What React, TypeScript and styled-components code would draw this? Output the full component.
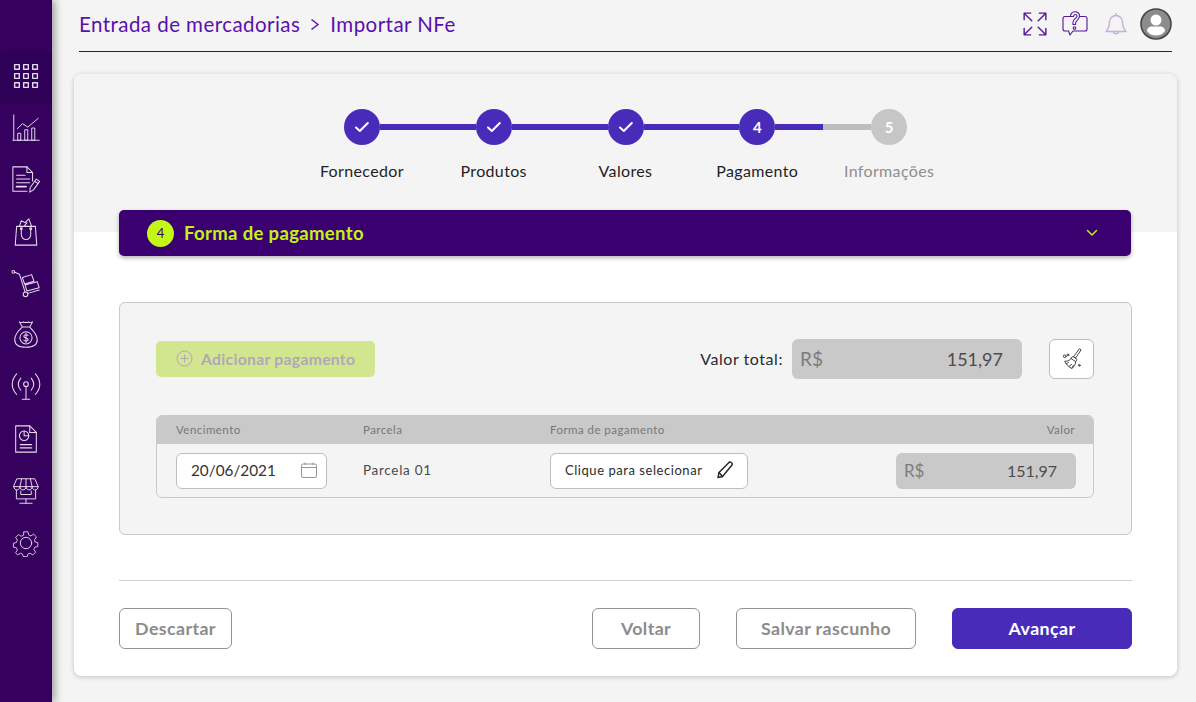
import React from "react";
import styled, { createGlobalStyle } from "styled-components";

const Global = createGlobalStyle`
  html, body { margin: 0; padding: 0; height: 100%; }
  body { background: #f4f4f4; font-family: "Lato", "Noto Sans", sans-serif; overflow: hidden; }
  * { box-sizing: border-box; }
`;

const Shell = styled.div`
  display: flex;
  width: 1196px;
  height: 702px;
`;
const Sidebar = styled.nav`
  width: 52px;
  flex: none;
  background: #36005f;
  padding-top: 51px;
  box-shadow: 3px 0 8px rgba(0, 0, 0, 0.35);
  z-index: 2;
`;
const NavItem = styled.div<{ $active?: boolean }>`
  height: 51.8px;
  display: flex;
  align-items: center;
  justify-content: center;
  background: ${(p) => (p.$active ? "#2f0058" : "transparent")};
  border-radius: ${(p) => (p.$active ? "6px 0 0 0" : "0")};
  border-bottom: 1px solid rgba(0, 0, 0, 0.06);
  color: #e6dcee;
  svg { display: block; }
`;
const Main = styled.main`
  flex: 1;
  min-width: 0;
  padding: 0 19px 26px 22px;
  display: flex;
  flex-direction: column;
`;
const TopBar = styled.header`
  height: 52px;
  margin: 0 5px 22px 5px;
  display: flex;
  align-items: center;
  justify-content: space-between;
  border-bottom: 1px solid #4a0099;
  padding-bottom: 3px;
`;
const Crumbs = styled.div`
  display: flex;
  align-items: center;
  font-size: 20.5px;
  letter-spacing: 0.45px;
  color: #5a10ac;
  gap: 10px;
`;
const TopIcons = styled.div`
  display: flex;
  align-items: center;
  color: #54189a;
  svg { display: block; }
`;
const IconSlot = styled.span<{ $w: number; $faded?: boolean }>`
  width: ${(p) => p.$w}px;
  display: flex;
  justify-content: center;
  opacity: ${(p) => (p.$faded ? 0.3 : 1)};
`;
const Card = styled.section`
  height: 602px;
  border-radius: 8px;
  padding: 35px 45px 0;
  background: linear-gradient(#f4f4f4 158px, #fff 158px);
  box-shadow: 0 1px 5px rgba(0, 0, 0, 0.22);
`;
const Track = styled.div`
  width: 563px;
  margin: 0 auto;
  display: flex;
  align-items: center;
`;
const Dot = styled.div<{ $on: boolean }>`
  width: 36px;
  height: 36px;
  flex: none;
  border-radius: 50%;
  background: ${(p) => (p.$on ? "#482cb9" : "#c6c6c6")};
  color: #fff;
  font-size: 15px;
  font-weight: 700;
  display: flex;
  align-items: center;
  justify-content: center;
`;
const Link = styled.div<{ $pct: number }>`
  flex: 1;
  height: 6px;
  background: linear-gradient(
    to right,
    #482cb9 ${(p) => p.$pct}%,
    #bdbdbd ${(p) => p.$pct}%
  );
`;
const Labels = styled.div`
  width: 659px;
  margin: 16px auto 0;
  display: grid;
  grid-template-columns: repeat(5, 1fr);
`;
const StepLabel = styled.div<{ $on: boolean }>`
  text-align: center;
  font-size: 16px;
  line-height: 20px;
  letter-spacing: 0.35px;
  color: ${(p) => (p.$on ? "#1f1f24" : "#8e8e8e")};
`;
const Accordion = styled.div`
  height: 46px;
  margin: 29px 1px 0 0;
  border-radius: 5px;
  background: #3a006f;
  box-shadow: 0 2px 4px rgba(0, 0, 0, 0.3);
  display: flex;
  align-items: center;
  padding: 0 33px 0 28px;
  color: #c3f218;
`;
const Badge = styled.span`
  width: 27px;
  height: 27px;
  border-radius: 50%;
  background: #c3f716;
  color: #3a006f;
  font-size: 13px;
  display: flex;
  align-items: center;
  justify-content: center;
`;
const AccTitle = styled.span`
  flex: 1;
  margin-left: 10px;
  font-size: 18.5px;
  font-weight: 700;
  letter-spacing: 0.35px;
`;
const Panel = styled.div`
  height: 233px;
  margin-top: 46px;
  background: #f4f4f4;
  border: 1px solid #c9c9c9;
  border-radius: 6px;
  padding: 36px 37px 0 36px;
`;
const PanelTop = styled.div`
  display: flex;
  align-items: center;
  height: 40px;
`;
const AddBtn = styled.div`
  width: 219px;
  height: 36px;
  border-radius: 5px;
  background: #d2e690;
  color: #b0a8b8;
  font-size: 15.8px;
  font-weight: 700;
  letter-spacing: 0.25px;
  display: flex;
  align-items: center;
  gap: 8px;
  padding: 0 0 1px 20px;
`;
const TotalLabel = styled.span`
  margin-left: auto;
  margin-right: 9px;
  font-size: 16px;
  letter-spacing: 0.55px;
  color: #2a2a30;
  padding-bottom: 1px;
`;
const Money = styled.div<{ $w: number; $h: number; $size: number; $pad: number }>`
  width: ${(p) => p.$w}px;
  height: ${(p) => p.$h}px;
  border-radius: 6px;
  background: #c9c9c9;
  display: flex;
  align-items: center;
  justify-content: space-between;
  padding: 0 ${(p) => p.$pad}px 1px 8px;
  font-size: ${(p) => p.$size}px;
  color: #4c4c4c;
  span:first-child { color: #7c7c7c; font-size: 1.06em; }
`;
const BroomBtn = styled.div`
  width: 45px;
  height: 40px;
  margin-left: 27px;
  background: #fff;
  border: 1px solid #bdbdbd;
  border-radius: 6px;
  display: flex;
  align-items: center;
  justify-content: center;
  color: #333;
`;
const Table = styled.div`
  margin-top: 36px;
  height: 83px;
  border: 1px solid #c9c9c9;
  border-radius: 6px;
  overflow: hidden;
`;
const Columns = styled.div`
  display: grid;
  grid-template-columns: 187px 187px 1fr 180px;
  padding: 0 17px 0 19px;
  align-items: center;
`;
const HeadRow = styled(Columns)`
  height: 28px;
  padding-bottom: 2px;
  background: #c9c9c9;
  font-size: 11.5px;
  letter-spacing: 0.45px;
  color: #77777a;
`;
const BodyRow = styled(Columns)`
  height: 53px;
`;
const RightCell = styled.span`
  text-align: right;
  padding-right: 1px;
`;
const DateField = styled.div`
  width: 151px;
  height: 36px;
  background: #fff;
  border: 1px solid #bdbdbd;
  border-radius: 6px;
  display: flex;
  align-items: center;
  justify-content: space-between;
  padding: 0 9px 1px 14px;
  font-size: 15.3px;
  color: #333;
  svg { color: #969696; }
`;
const CellText = styled.span`
  font-size: 13.5px;
  letter-spacing: 0.7px;
  color: #4a4a4a;
  padding-bottom: 2px;
`;
const SelectBtn = styled.div`
  width: 198px;
  height: 36px;
  background: #fff;
  border: 1px solid #bdbdbd;
  border-radius: 6px;
  display: flex;
  align-items: center;
  justify-content: space-between;
  padding: 0 13px 1px 14px;
  font-size: 13px;
  letter-spacing: 0.55px;
  color: #2c2c2c;
`;
const Divider = styled.hr`
  border: 0;
  border-top: 1px solid #cfcfcf;
  margin: 45px 0 27px;
`;
const Actions = styled.div`
  display: flex;
  align-items: center;
`;
const Btn = styled.button<{ $w: number; $primary?: boolean; $gap?: number }>`
  width: ${(p) => p.$w}px;
  height: 41px;
  margin-left: ${(p) => p.$gap ?? 0}px;
  border-radius: 6px;
  border: 1px solid ${(p) => (p.$primary ? "#482cb9" : "#939393")};
  background: ${(p) => (p.$primary ? "#482cb9" : "#fff")};
  color: ${(p) => (p.$primary ? "#fff" : "#8c8c8c")};
  font-family: inherit;
  font-size: 17.8px;
  font-weight: 700;
  letter-spacing: 0.4px;
  padding: 0 0 2px;
`;

const L: React.FC<React.PropsWithChildren<{ s: number; sw?: number; vb?: number }>> = ({ s, sw = 1.1, vb = 32, children }) => (
  <svg width={s} height={s} viewBox={`0 0 ${vb} ${vb}`} fill="none" stroke="currentColor" strokeWidth={sw} strokeLinecap="round" strokeLinejoin="round">
    {children}
  </svg>
);

const Apps = () => (
  <L s={34} sw={1.3}>
    {[0, 1, 2].flatMap((r) =>
      [0, 1, 2].map((c) => <rect key={`${r}${c}`} x={5.3 + c * 8.5} y={5.3 + r * 8.5} width={4.4} height={4.4} />)
    )}
  </L>
);
const Chart = () => (
  <L s={28}>
    <path d="M2 1v29M1 30h30" />
    <rect x="7" y="22" width="3" height="8" />
    <rect x="15" y="18" width="3" height="12" />
    <rect x="23" y="16" width="3" height="14" />
    <path d="M6 17l6-6 6 4 12-10" />
  </L>
);
const Doc = () => (
  <L s={30}>
    <path d="M23 17V8l-6-6H2v26h15" />
    <path d="M17 2v6h6" />
    <path d="M6 11h9M6 15h14M6 19h14" />
    <path d="M6 23h10" strokeWidth="2" />
    <path d="M20 29l.5-5 6.500-9 3.500 2.500-6.500 9zM25.500 17.500l3.500 2.500" />
  </L>
);
const Bag = () => (
  <L s={30}>
    <path d="M6 10h20l1.500 20h-23zM6 10h20" />
    <path d="M11 12v7a5 5 0 0 0 10 0v-7" />
    <circle cx="11" cy="12.500" r="1" />
    <circle cx="21" cy="12.500" r="1" />
    <path d="M9 10l2-6 4 2 4-4 3 8M14 10l3-4" />
  </L>
);
const Cart = () => (
  <L s={30}>
    <circle cx="2.500" cy="3" r="1.500" />
    <path d="M4 3.500l5 2 6 19" />
    <circle cx="15.500" cy="27" r="2.500" />
    <path d="M18 26l12-3.500" />
    <path d="M12 9l10-3 2.500 7-10 3zM15 17l13-3.500 2 6.500-13 3.500z" />
  </L>
);
const Money2 = () => (
  <L s={30}>
    <path d="M12 7.500L9 2c2 1 3.500 1 4.500 0 1 1 4 1 5 0 1 1 2.500 1 4.500 0l-3 5.500M12 7.500h8M12 7.500C8 11 4 16 4 21c0 5 4 8 12 8s12-3 12-8c0-5-4-9.500-8-13.500" />
    <circle cx="16" cy="19" r="6.500" />
    <path d="M18.300 16.500c-1-1.200-4.600-1.300-4.600 1 0 2.300 4.600 1 4.600 3.200 0 2.300-3.700 2.100-4.600.9M16 14v10" />
  </L>
);
const Signal = () => (
  <L s={30}>
    <circle cx="16" cy="13" r="2.500" />
    <path d="M16 15.500V29M12 29h8" />
    <path d="M10.500 6.500c-3.500 4-3.500 9 0 13M21.500 6.500c3.500 4 3.500 9 0 13" />
    <path d="M6 2c-6 7-6 15 0 22M26 2c6 7 6 15 0 22" />
  </L>
);
const Report = () => (
  <L s={30}>
    <path d="M5 2h15l7 7v21H5z" />
    <path d="M20 2v7h7" />
    <circle cx="14" cy="12.500" r="5" />
    <path d="M14 7.500v5h5" />
    <path d="M10 22h12M10 25.500h12" strokeWidth="1.400" />
  </L>
);
const Store = () => (
  <L s={28}>
    <path d="M6 2h20l4 9H2z" />
    <path d="M2 11c0 5 7 5 7 0 0 5 7 5 7 0 0 5 7 5 7 0 0 5 7 5 7 0" />
    <path d="M11 2l-2 9M16 2v9M21 2l2 9" />
    <path d="M5 15v10h22V15M10 16v4h12v-4" />
    <path d="M16 25v5M9 30h14" />
  </L>
);
const Gear = () => (
  <L s={28}>
    <circle cx="16" cy="16" r="6.500" />
    <path d="M13.500 2h5l.9 4 2.800 1.200 3.500-2.200 3.500 3.500-2.200 3.500L27.200 14.800l3.800.9v5l-3.800.8-1.200 2.900 2.200 3.500-3.500 3.500-3.500-2.200-2.800 1.200-.9 3.100h-5l-.9-3.100-2.800-1.200-3.500 2.200L2.800 28.700 5 25.200 3.800 22.300 0 21.500v-5l3.800-.9L5 12.500 2.800 9 6.300 5.500l3.500 2.200 2.800-1.200z" transform="translate(1.600 1.400) scale(.9)" />
  </L>
);
const Expand = () => (
  <L s={26} sw={1.3} vb={24}>
    <path d="M2 8V2h6M2 2l7 7M16 2h6v6M22 2l-7 7M2 16v6h6M2 22l7-7M22 16v6h-6M22 22l-7-7" />
  </L>
);
const Help = () => (
  <L s={26} sw={1.1} vb={26}>
    <path d="M8 5.500H3a2 2 0 0 0-2 2V18a2 2 0 0 0 2 2h3.500l1.500 4 3-4h12a2 2 0 0 0 2-2V7.500a2 2 0 0 0-2-2h-5" />
    <path d="M8.500 5.500c0-6 9-6.500 9-.5 0 4-4 4-4 7.500v1h-2.500v-2c0-4 4-4 4-6.500 0-2-3.500-2-3.500.5z" />
    <circle cx="12.500" cy="17" r="1.300" />
  </L>
);
const Bell = () => (
  <L s={24} sw={1.4} vb={24}>
    <path d="M12 3.500a6.500 6.500 0 0 0-6.500 6.500c0 5-1.500 7.500-3.500 9.500h20c-2-2-3.500-4.500-3.500-9.500A6.500 6.500 0 0 0 12 3.500zM12 3.500V1.500" />
    <path d="M9.500 19.500c0 3 5 3 5 0" />
  </L>
);
const Avatar = () => (
  <svg width="32" height="32" viewBox="0 0 32 32">
    <circle cx="16" cy="16" r="15" fill="#8c8c8c" stroke="#444" strokeWidth="1.600" />
    <circle cx="16" cy="12" r="5.500" fill="#fff" />
    <path d="M7 23c0-3.500 3-4.500 5-4.500h8c2 0 5 1 5 4.500-2 3-5.500 4.500-9 4.500S9 26 7 23z" fill="#fff" />
  </svg>
);
const Check = () => (
  <svg width="16" height="16" viewBox="0 0 16 16" fill="none" stroke="#fff" strokeWidth="2" strokeLinecap="round" strokeLinejoin="round">
    <path d="M2 8.500l3.800 3.500 8-8" />
  </svg>
);
const Chevron = () => (
  <svg width="12" height="8" viewBox="0 0 12 8" fill="none" stroke="#c3f218" strokeWidth="1.500" strokeLinecap="round" strokeLinejoin="round">
    <path d="M1.500 1.500L6 6l4.500-4.500" />
  </svg>
);
const Plus = () => (
  <svg width="17" height="17" viewBox="0 0 17 17" fill="none" stroke="#b0a8b8" strokeWidth="1">
    <circle cx="8.500" cy="8.500" r="7.500" />
    <path d="M8.500 4.500v8M4.500 8.500h8" />
  </svg>
);
const Broom = () => (
  <svg width="20" height="22" viewBox="0 0 22 24" fill="none" stroke="currentColor" strokeWidth="1" strokeLinecap="round" strokeLinejoin="round">
    <path d="M19.500 1l1.500 1-6 9-2-1.300z" />
    <path d="M12.500 9.500l4 3-1.500 2.500-5-3.500z" />
    <path d="M10 11.500c-1 2-4 3-7 3 1 3 4 6 8 8 2-2 4-4 4-7.500" />
    <path d="M5 17l2-1M8 20l2.500-2M11 22l1.500-3" />
    <circle cx="3" cy="9" r="1.500" />
    <circle cx="6.500" cy="7.500" r="1" />
    <circle cx="19" cy="19" r="1" />
  </svg>
);
const Calendar = () => (
  <svg width="16" height="16" viewBox="0 0 16 16" fill="none" stroke="currentColor" strokeWidth="1">
    <rect x="0.500" y="2" width="15" height="13.500" rx="1.500" />
    <path d="M0.500 5.500h15M4 0.500V3M12 0.500V3" />
  </svg>
);
const Pencil = () => (
  <svg width="18" height="18" viewBox="0 0 18 18" fill="none" stroke="#222" strokeWidth="1.400" strokeLinecap="round" strokeLinejoin="round">
    <path d="M2 16.500l1-5L12.500 2a2 2 0 0 1 3.300 2.300L6.500 15.500z" />
    <path d="M3 11.500l3.500 4" />
  </svg>
);
const Gt = () => (
  <svg width="10" height="13" viewBox="0 0 10 13" fill="none" stroke="#5a10ac" strokeWidth="1.400">
    <path d="M1.500 1.500L8 6.500l-6.500 5" />
  </svg>
);

const nav = [Apps, Chart, Doc, Bag, Cart, Money2, Signal, Report, Store, Gear];
const steps = ["Fornecedor", "Produtos", "Valores", "Pagamento", "Informações"];

export default function App() {
  return (
    <Shell>
      <Global />
      <Sidebar>
        {nav.map((Icon, i) => (
          <NavItem key={i} $active={i === 0}>
            <Icon />
          </NavItem>
        ))}
      </Sidebar>
      <Main>
        <TopBar>
          <Crumbs>
            <span>Entrada de mercadorias</span>
            <Gt />
            <span>Importar NFe</span>
          </Crumbs>
          <TopIcons>
            <IconSlot $w={46}><Expand /></IconSlot>
            <IconSlot $w={34}><Help /></IconSlot>
            <IconSlot $w={48} $faded><Bell /></IconSlot>
            <IconSlot $w={32}><Avatar /></IconSlot>
          </TopIcons>
        </TopBar>
        <Card>
          <Track>
            {[1, 2, 3, 4, 5].map((n) => (
              <React.Fragment key={n}>
                <Dot $on={n < 5}>{n < 4 ? <Check /> : n}</Dot>
                {n < 5 && <Link $pct={n === 4 ? 50 : 100} />}
              </React.Fragment>
            ))}
          </Track>
          <Labels>
            {steps.map((s, i) => (
              <StepLabel key={s} $on={i < 4}>{s}</StepLabel>
            ))}
          </Labels>
          <Accordion>
            <Badge>4</Badge>
            <AccTitle>Forma de pagamento</AccTitle>
            <Chevron />
          </Accordion>
          <Panel>
            <PanelTop>
              <AddBtn><Plus />Adicionar pagamento</AddBtn>
              <TotalLabel>Valor total:</TotalLabel>
              <Money $w={230} $h={40} $size={18} $pad={19}>
                <span>R$</span>
                <span>151,97</span>
              </Money>
              <BroomBtn><Broom /></BroomBtn>
            </PanelTop>
            <Table>
              <HeadRow>
                <span>Vencimento</span>
                <span>Parcela</span>
                <span>Forma de pagamento</span>
                <RightCell>Valor</RightCell>
              </HeadRow>
              <BodyRow>
                <DateField>20/06/2021<Calendar /></DateField>
                <CellText>Parcela 01</CellText>
                <SelectBtn>Clique para selecionar<Pencil /></SelectBtn>
                <Money $w={180} $h={36} $size={16} $pad={19}>
                  <span>R$</span>
                  <span>151,97</span>
                </Money>
              </BodyRow>
            </Table>
          </Panel>
          <Divider />
          <Actions>
            <Btn $w={113}>Descartar</Btn>
            <Btn $w={108} $gap={360}>Voltar</Btn>
            <Btn $w={180} $gap={36}>Salvar rascunho</Btn>
            <Btn $w={180} $gap={36} $primary>Avançar</Btn>
          </Actions>
        </Card>
      </Main>
    </Shell>
  );
}
